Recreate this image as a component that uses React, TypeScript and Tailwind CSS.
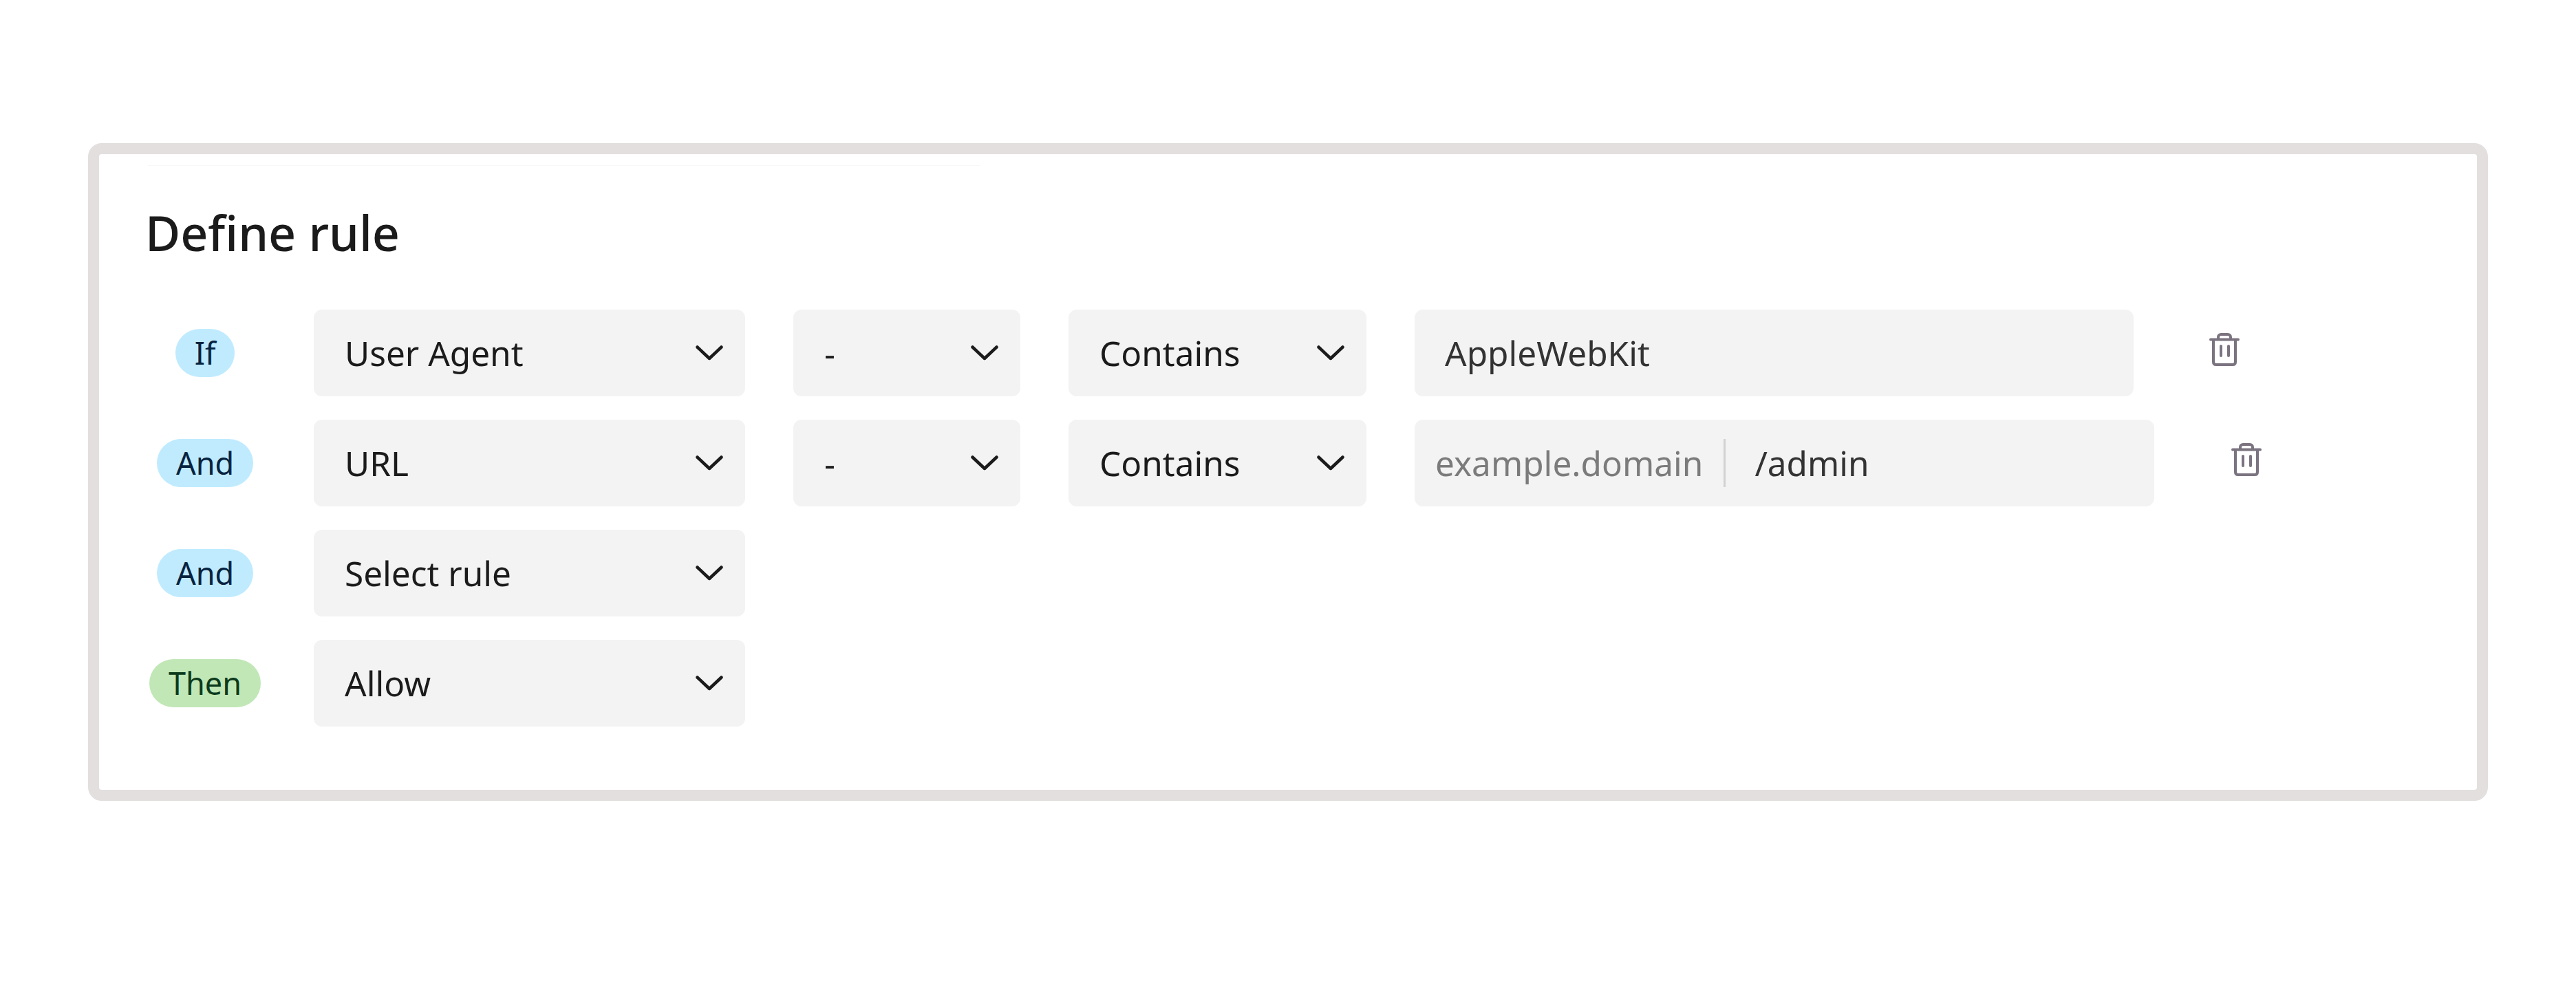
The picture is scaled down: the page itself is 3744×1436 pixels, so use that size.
import type { SVGProps } from "react";

const font = "font-['Noto_Sans',sans-serif]";

type Row = {
  label: string;
  tone: "blue" | "green";
  field: string;
  op?: string;
  value?: "plain" | "domain";
};

const rows: ReadonlyArray<Row> = [
  { label: "If", tone: "blue", field: "User Agent", op: "Contains", value: "plain" },
  { label: "And", tone: "blue", field: "URL", op: "Contains", value: "domain" },
  { label: "And", tone: "blue", field: "Select rule" },
  { label: "Then", tone: "green", field: "Allow" },
];

function ChevronDown(props: SVGProps<SVGSVGElement>) {
  return (
    <svg viewBox="0 0 40 22" fill="none" stroke="currentColor" strokeWidth="4.5" strokeLinecap="round" strokeLinejoin="round" aria-hidden {...props}>
      <path d="M2.5 2.5 L20 19 L37.5 2.5" />
    </svg>
  );
}

function IconTrash(props: SVGProps<SVGSVGElement>) {
  return (
    <svg viewBox="0 0 44 48" fill="none" stroke="currentColor" strokeWidth="4" strokeLinecap="round" strokeLinejoin="round" aria-hidden {...props}>
      <path d="M2 9.5 H42" />
      <path d="M13 9 V6 C13 3.5 15 2 17 2 H27 C29 2 31 3.5 31 6 V9" />
      <path d="M6 10 V42 C6 44.5 7.5 46 10 46 H34 C36.5 46 38 44.5 38 42 V10" />
      <path d="M17 19 V33" />
      <path d="M28 19 V33" />
    </svg>
  );
}

function Select({ label, className }: { label: string; className: string }) {
  return (
    <div className={`flex h-[126px] shrink-0 items-center justify-between rounded-[12px] bg-[#f3f3f3] pl-[45px] pr-[32px] text-[#1b1b1b] ${className}`}>
      <span>{label}</span>
      <ChevronDown className="h-[22px] w-[40px]" />
    </div>
  );
}

function Badge({ label, tone }: { label: string; tone: Row["tone"] }) {
  return (
    <div className="flex w-[168px] shrink-0 justify-center text-[45px]">
      <span
        className={
          tone === "blue"
            ? "flex h-[70px] items-center rounded-[35px] bg-[#c0ebff] px-[28px] text-[#07233f]"
            : "flex h-[70px] items-center rounded-[35px] bg-[#c1e7b6] px-[28px] text-[#0c3a1c]"
        }
      >
        {label}
      </span>
    </div>
  );
}

export default function App() {
  return (
    <div className={`h-[1436px] bg-white pl-[128px] pt-[208px] text-[49.5px] ${font}`}>
      <div className="h-[956px] w-[3488px] rounded-[20px] border-[16px] border-[#e3dfdf] pl-[70px]">
        <div className="ml-[1px] mt-[16px] h-px w-[1209px] bg-[#f8f8f8]" />
        <h2 className="-ml-[3px] mt-[48px] text-[70px] font-medium leading-[98px] text-[#1b1b1b]">Define rule</h2>
        <div className="mt-[63px] flex flex-col gap-[34px]">
          {rows.map((row, i) => (
            <div key={i} className="flex items-center">
              <Badge label={row.label} tone={row.tone} />
              <Select label={row.field} className="ml-[74px] w-[627px]" />
              {row.op && (
                <>
                  <Select label="-" className="ml-[70px] w-[330px]" />
                  <Select label={row.op} className="ml-[70px] w-[433px]" />
                </>
              )}
              {row.value === "plain" && (
                <>
                  <div className="ml-[70px] flex h-[126px] w-[1045px] items-center rounded-[12px] bg-[#f3f3f3] pl-[44px] text-[#333333]">
                    AppleWebKit
                  </div>
                  <IconTrash className="ml-[110px] -mt-[10px] h-[48px] w-[44px] text-[#7b7480]" />
                </>
              )}
              {row.value === "domain" && (
                <>
                  <div className="ml-[70px] flex h-[126px] w-[1075px] items-center rounded-[12px] bg-[#f3f3f3] pl-[30px] text-[#333333]">
                    <span className="text-[#7b7b7b]">example.domain</span>
                    <span className="ml-[30px] h-[70px] w-[3px] bg-[#d2d2d2]" />
                    <span className="ml-[42px]">/admin</span>
                  </div>
                  <IconTrash className="ml-[112px] -mt-[10px] h-[48px] w-[44px] text-[#7b7480]" />
                </>
              )}
            </div>
          ))}
        </div>
      </div>
    </div>
  );
}
